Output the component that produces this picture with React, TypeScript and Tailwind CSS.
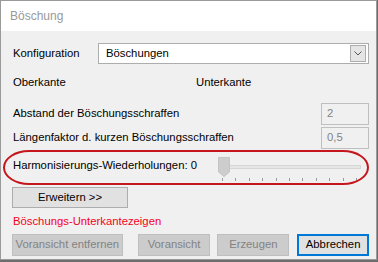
import React from "react";

// Windows dialog "Böschung" with the annotated slider row.
const FONT = { fontFamily: '"Liberation Sans", Arial, sans-serif' };

function Btn({
  label,
  disabled,
  focused,
  className = "",
}: {
  label: string;
  disabled?: boolean;
  focused?: boolean;
  className?: string;
}) {
  const tone = disabled
    ? "bg-[#cccccc] border-[#bfbfbf] text-[#838383]"
    : focused
      ? "bg-[#e1e1e1] border-2 border-[#0078d7] text-black"
      : "bg-[#e1e1e1] border-[#adadad] text-black";
  return (
    <div className={`flex items-center justify-center whitespace-nowrap border ${tone} ${className}`}>
      {label}
    </div>
  );
}

function NumBox({ value }: { value: string }) {
  return (
    <div className="flex h-[22px] w-[48px] items-center border border-[#bfbfbf] bg-[#f0f0f0] pl-[5px] text-[#838383]">
      {value}
    </div>
  );
}

export default function App() {
  const ticks = Array.from({ length: 11 }, (_, i) => i);
  return (
    <div className="h-[262px] w-[378px] whitespace-nowrap bg-[#6d6d6d] text-[11.3px] leading-none text-black" style={FONT}>
      <div className="flex h-[260px] w-[377px] flex-col border border-[#9a9a9a] bg-[#f0f0f0]">
        <div className="flex h-[30px] items-center bg-white pl-[9px] text-[12px] text-[#999]">Böschung</div>

        <div className="relative flex flex-col pl-[11px] pr-[7px]">
          {/* Konfiguration */}
          <div className="mt-[12px] flex h-[21px] items-center">
            <span className="w-[86px] pl-[1px]">Konfiguration</span>
            <div className="flex h-[21px] flex-1 items-center justify-between border border-[#adadad] bg-white pl-[7px] pr-[2px]">
              <span>Böschungen</span>
              <div className="flex h-[17px] w-[16px] items-center justify-center border border-[#adadad] bg-[#e5e5e5]">
                <svg width="8" height="5" viewBox="0 0 8 5">
                  <path d="M0.5 0.5 L4 4 L7.5 0.5" fill="none" stroke="#555" strokeWidth="1" />
                </svg>
              </div>
            </div>
          </div>

          {/* Ober-/Unterkante */}
          <div className="mt-[11px] flex h-[16px] items-center">
            <span className="w-[184px] pl-[1px]">Oberkante</span>
            <span>Unterkante</span>
          </div>

          {/* Numeric parameters */}
          <div className="mt-[12px] flex h-[22px] items-center justify-between">
            <span className="pl-[1px]">Abstand der Böschungsschraffen</span>
            <NumBox value="2" />
          </div>
          <div className="mt-[2px] flex h-[22px] items-center justify-between">
            <span className="pl-[1px]">Längenfaktor d. kurzen Böschungsschraffen</span>
            <NumBox value="0,5" />
          </div>

          {/* Slider row */}
          <div className="relative mt-[1px] flex h-[35px] items-center">
            <span className="w-[206px] pb-[3px] pl-[1px]">Harmonisierungs-Wiederholungen: 0</span>
            <div className="relative h-[35px] flex-1">
              <div className="absolute left-[8px] right-[8px] top-[15px] h-[4px] border border-[#d6d6d6] bg-[#e7e7e7]" />
              <svg className="absolute left-[0px] top-[7px]" width="12" height="20" viewBox="0 0 12 20">
                <path d="M0.5 0.5 H11.5 V15 L6 19.5 L0.5 15 Z" fill="#cdcdcd" stroke="#c4c4c4" />
              </svg>
              <div className="absolute left-[4px] right-[12px] top-[28px] flex justify-between">
                {ticks.map((t) => (
                  <div key={t} className="h-[3px] w-px bg-[#9b9b9b]" />
                ))}
              </div>
            </div>
            <div className="pointer-events-none absolute -left-[9px] right-0 top-0 h-[35px] rounded-[26px/17.5px] border-2 border-[#c4161c]" />
          </div>

          <Btn label="Erweitern >>" className="mt-[2px] h-[21px] w-[116px]" />

          <div className="mt-[7px] flex h-[14px] items-center pl-[1px] text-[#f5001c]">Böschungs-Unterkantezeigen</div>

          <div className="mt-[5px] flex h-[22px]">
            <Btn label="Voransicht entfernen" disabled className="w-[111px]" />
            <Btn label="Voransicht" disabled className="ml-[15px] w-[73px]" />
            <Btn label="Erzeugen" disabled className="ml-[7px] w-[72px]" />
            <Btn label="Abbrechen" focused className="ml-[8px] w-[72px]" />
          </div>
        </div>
      </div>
    </div>
  );
}
